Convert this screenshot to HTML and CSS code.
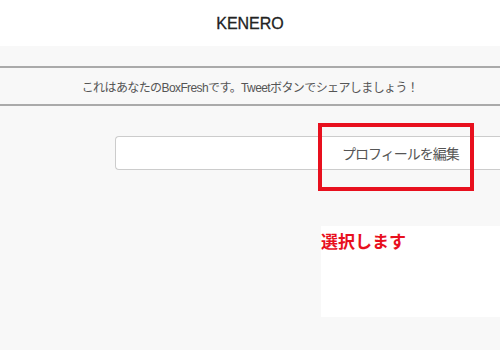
FILE: index.html
```html
<!DOCTYPE html>
<html lang="ja">
<head>
    <meta charset="UTF-8">
    <title>KENERO</title>
    <link rel="stylesheet" href="styles.css">
</head>
<body>
    <header class="site-header">
        <h1 class="logo">KENERO</h1>
    </header>
    <div class="notice">
        <p>これはあなたのBoxFreshです。Tweetボタンでシェアしましょう！</p>
    </div>
    <div class="profile-row">
        <div class="profile-box">
            <span class="edit-link">プロフィールを編集</span>
        </div>
    </div>
    <div class="highlight"></div>
    <div class="callout">選択します</div>
</body>
</html>
```

FILE: styles.css
```css
body {
    margin: 0;
    height: 350px;
    overflow: hidden;
    position: relative;
    font-family: 'Liberation Sans', Arial, 'Noto Sans CJK JP', sans-serif;
    color: #555;
    background: #f8f8f8;
}

.site-header {
    height: 46px;
    background: #fff;
    display: flex;
    justify-content: center;
    align-items: center;
}

.logo {
    margin: 2px 0 0;
    font-size: 16px;
    font-weight: normal;
    color: #222;
    -webkit-text-stroke: 0.3px #222;
}

.notice {
    margin-top: 20px;
    height: 36px;
    border-top: 2px solid #aaa;
    border-bottom: 2px solid #aaa;
    display: flex;
    justify-content: center;
    align-items: center;
}

.notice p {
    margin: 0;
    font-size: 12px;
    letter-spacing: -0.6px;
    color: #555;
}

.profile-row {
    padding: 30px 0 0 115px;
}

.profile-box {
    height: 32px;
    background: #fff;
    border: 1px solid #ccc;
    border-right: none;
    border-radius: 4px 0 0 4px;
    display: flex;
    align-items: center;
    padding-left: 226px;
}

.edit-link {
    font-size: 14px;
    letter-spacing: -1px;
    color: #555;
}

/* annotation overlays */
.highlight {
    position: absolute;
    left: 318px;
    top: 123px;
    width: 148px;
    height: 60px;
    border: 4px solid #e8101e;
}

.callout {
    position: absolute;
    left: 321px;
    top: 226px;
    width: 179px;
    height: 91px;
    background: #fff;
    color: #e8101e;
    font-size: 17px;
    font-weight: bold;
    line-height: 34px;
}
```
